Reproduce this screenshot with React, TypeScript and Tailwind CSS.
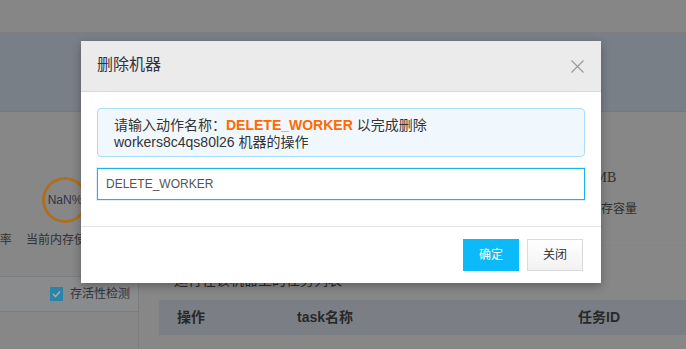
import React from 'react';

const font = 'font-["Liberation_Sans","Noto_Sans_CJK_SC",sans-serif]';

function CloseIcon() {
  return (
    <svg width="13" height="13" viewBox="0 0 13 13" fill="none">
      <path d="M0.5 0.5L12.5 12.5M12.5 0.5L0.5 12.5" stroke="#9a9a9a" strokeWidth="1.2" />
    </svg>
  );
}

function Backdrop() {
  return (
    <div className="w-full h-full bg-[#c2c2c2] flex flex-col">
      <div className="h-[33px] bg-[#c0c0c0] border-b border-[#b4b4b4]" />
      <div className="h-[79px] bg-[#aeb7c2] border-b border-[#adadad]" />

      <div className="flex flex-1 min-h-0">
        <aside className="w-[139px] shrink-0 border-r border-[#b3b3b3] flex flex-col">
          <div className="h-[164px] overflow-hidden">
            <div className="flex -ml-[64px] pt-[65px]">
              <div className="w-[90px] shrink-0 flex flex-col items-center">
                <div className="w-[46px] h-[46px] -ml-[24px] rounded-full border-[3px] border-[#f5a030] flex items-center justify-center text-[12px] text-[#4a4a66]">
                  NaN%
                </div>
                <div className="mt-[9px] text-[12px] leading-[16px] text-[#484848] whitespace-nowrap">CPU使用率</div>
              </div>
              <div className="w-[84px] shrink-0 flex flex-col items-center">
                <div className="w-[46px] h-[46px] -ml-[6px] rounded-full border-[3px] border-[#f5a030] flex items-center justify-center text-[12px] text-[#4a4a66]">
                  NaN%
                </div>
                <div className="mt-[9px] text-[12px] leading-[16px] text-[#484848] whitespace-nowrap">当前内存使用率</div>
              </div>
            </div>
          </div>
          <div className="h-[36px] border-y border-[#b3b3b3] bg-[#c4c7ca] flex items-center justify-end pr-[8px] gap-[7px]">
            <span className="w-[13px] h-[14px] bg-[#3fbef2] flex items-center justify-center">
              <svg width="9" height="8" viewBox="0 0 9 8" fill="none">
                <path d="M1 4L3.5 6.5L8 1.5" stroke="#e8f4fa" strokeWidth="1.6" />
              </svg>
            </span>
            <span className="text-[12px] text-[#4a4a58]">存活性检测</span>
          </div>
        </aside>

        <main className="flex-1 pl-[20px] flex flex-col">
          <div className="h-[134px] border-b border-[#bdbdbd] flex justify-end pr-[50px] pt-[56px] -ml-[20px]">
            <div className="flex flex-col w-[59px]">
              <div className='text-[14px] leading-[20px] text-[#444] font-["Liberation_Serif","Noto_Sans_CJK_SC",serif] whitespace-nowrap'>
                1.2MB
              </div>
              <div className="mt-[13px] text-[12px] leading-[16px] text-[#444] whitespace-nowrap">总内存容量</div>
            </div>
          </div>
          <div className="mt-[24px] flex items-center text-[14px] leading-[20px] text-[#3c3c3c]">
            <span className="w-[5px] h-[5px] rounded-full bg-[#444] ml-[1px] mr-[9px]" />
            运行在该机器上的任务列表
          </div>
          <div className="mt-[10px] h-[35px] bg-[#b1b7bf] flex items-center text-[14px] font-bold text-[#3a3a3a] pl-[18px]">
            <div className="w-[120px]">操作</div>
            <div className="w-[281px]">task名称</div>
            <div>任务ID</div>
          </div>
        </main>
      </div>
    </div>
  );
}

export default function App() {
  return (
    <div className={`relative w-[686px] h-[349px] overflow-hidden ${font}`}>
      <Backdrop />
      <div className="absolute inset-0 bg-black/30" />

      <div className="absolute left-[81px] top-[41px] w-[520px] bg-white shadow-[0_3px_9px_rgba(0,0,0,0.3)]">
        <div className="h-[51px] bg-[#ebebeb] border-b border-[#d8d8d8] flex items-center justify-between pl-[16px] pr-[17px]">
          <h3 className="text-[16px] leading-[20px] -mt-[2px] text-[#2f3542]">删除机器</h3>
          <CloseIcon />
        </div>

        <div className="pt-[16px] px-[16px] pb-[26px]">
          <div className="border border-[#aadcf8] bg-[#f0f8fe] rounded-[4px] pt-[8px] pb-[5px] px-[16px] text-[14px] leading-[17px] text-[#333]">
            请输入动作名称：<span className="font-bold text-[#ff6a00]">DELETE_WORKER</span> 以完成删除
            <br />
            workers8c4qs80l26 机器的操作
          </div>
          <input
            readOnly
            value="DELETE_WORKER"
            className="mt-[11px] block w-full h-[32px] border border-[#1ab3ee] px-[8px] text-[12px] text-[#555] outline-none shadow-[0_0_0_1px_#dcf1fb]"
          />
        </div>

        <div className="border-t border-[#e5e5e5] flex justify-end gap-[8px] pt-[12px] pb-[12px] pr-[18px]">
          <button className="w-[56px] h-[32px] bg-[#0cbaf9] text-white text-[12px]">确定</button>
          <button className="w-[56px] h-[32px] border border-[#dadada] bg-gradient-to-b from-white to-[#f2f2f2] text-[#333] text-[12px]">
            关闭
          </button>
        </div>
      </div>
    </div>
  );
}
